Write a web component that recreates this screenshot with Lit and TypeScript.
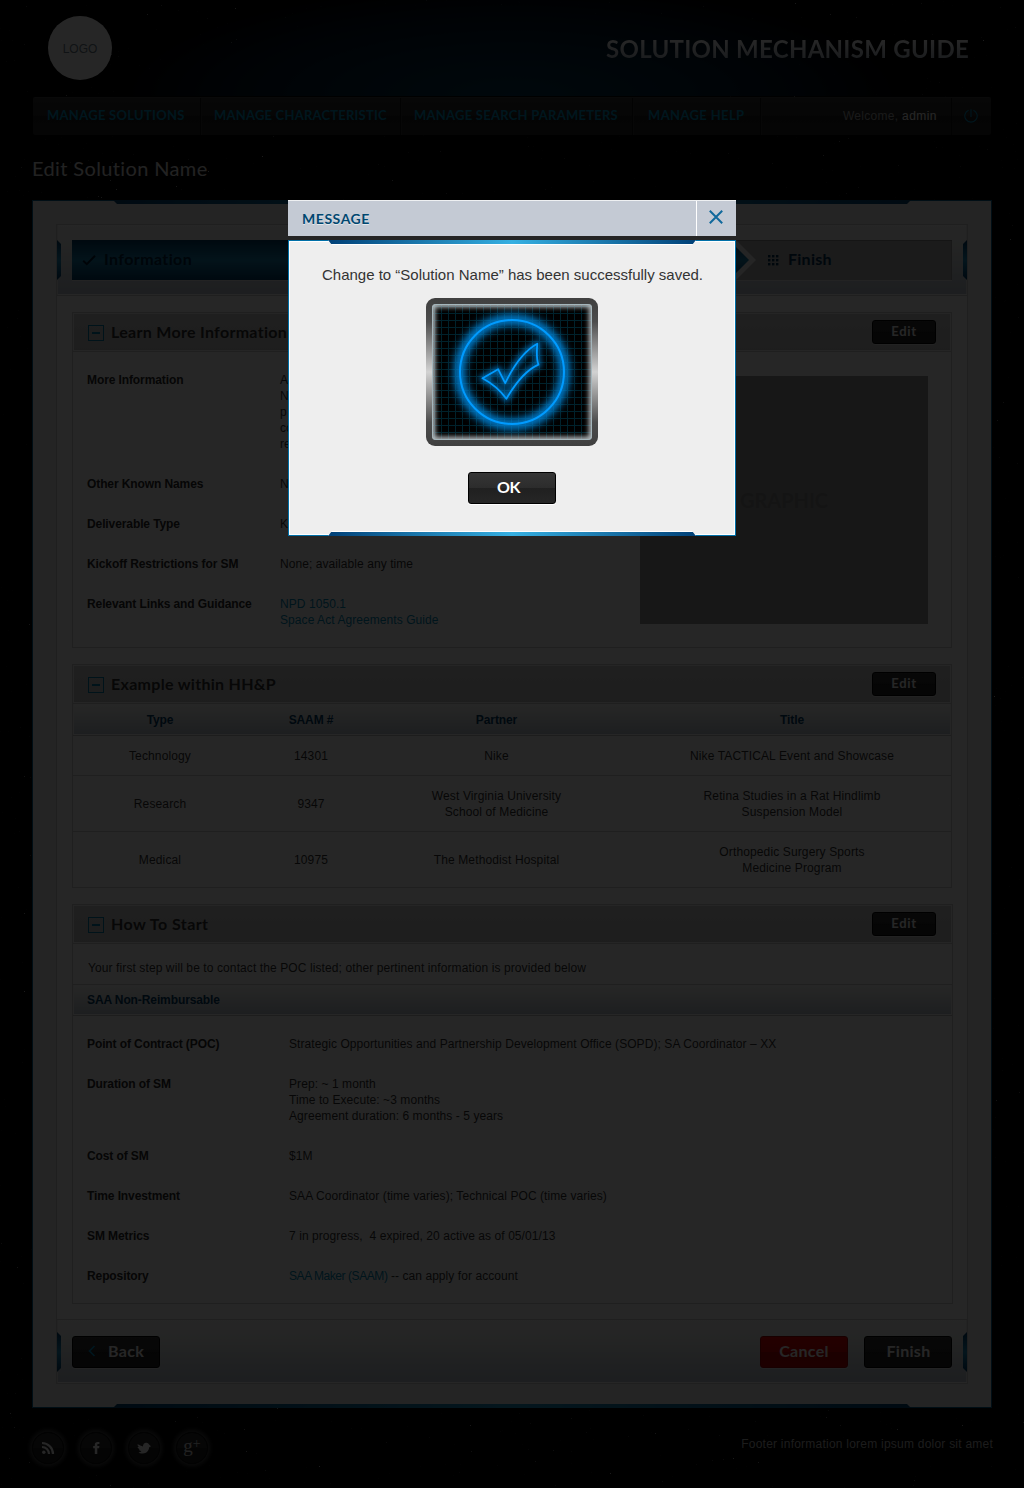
import { LitElement, html, svg, css, nothing } from "lit";
import { customElement } from "lit/decorators.js";

interface Row {
  label: string;
  lines: unknown[];
}

const MORE_INFO: Row[] = [
  { label: "More Information", lines: ["A", "N", "p", "co", "re"] },
  { label: "Other Known Names", lines: ["N"] },
  { label: "Deliverable Type", lines: ["K"] },
  { label: "Kickoff Restrictions for SM", lines: ["None; available any time"] },
  {
    label: "Relevant Links and Guidance",
    lines: [html`<a>NPD 1050.1</a>`, html`<a>Space Act Agreements Guide</a>`],
  },
];

const HOW_TO: Row[] = [
  {
    label: "Point of Contract (POC)",
    lines: ["Strategic Opportunities and Partnership Development Office (SOPD); SA Coordinator – XX"],
  },
  {
    label: "Duration of SM",
    lines: ["Prep: ~ 1 month", "Time to Execute: ~3 months", "Agreement duration: 6 months - 5 years"],
  },
  { label: "Cost of SM", lines: ["$1M"] },
  { label: "Time Investment", lines: ["SAA Coordinator (time varies); Technical POC (time varies)"] },
  { label: "SM Metrics", lines: ["7 in progress,\u00a0 4 expired, 20 active as of 05/01/13"] },
  { label: "Repository", lines: [html`<a class="tight">SAA Maker (SAAM)</a> -- can apply for account`] },
];

const EXAMPLES: string[][][] = [
  [["Technology"], ["14301"], ["Nike"], ["Nike TACTICAL Event and Showcase"]],
  [["Research"], ["9347"], ["West Virginia University", "School of Medicine"], ["Retina Studies in a Rat Hindlimb", "Suspension Model"]],
  [["Medical"], ["10975"], ["The Methodist Hospital"], ["Orthopedic Surgery Sports", "Medicine Program"]],
];

// Star field: a seeded generator keeps the dots in the same place on every load.
function makeStars(count: number) {
  let seed = 7;
  const next = () => (seed = (seed * 16807) % 2147483647) / 2147483647;
  return Array.from({ length: count }, () => ({
    x: Math.floor(next() * 1024),
    y: Math.floor(next() * 1488),
    o: 0.07 + Math.pow(next(), 7) * 0.7,
  }));
}
const STARS = makeStars(2600);

@customElement("app-root")
export class AppRoot extends LitElement {
  static styles = css`
    :host {
      display: block;
      font-family: "Liberation Sans", Arial, sans-serif;
      font-size: 12px;
      line-height: 16px;
      color: #333;
    }
    * { box-sizing: border-box; }
    svg { display: block; }
    a { color: #008ab8; }
    a.tight { letter-spacing: -0.43px; }
    .lato { font-family: Lato, "Open Sans", sans-serif; font-weight: 700; }
    .page {
      position: relative;
      width: 1024px;
      height: 1488px;
      overflow: hidden;
      background: #000;
    }
    .stars { position: absolute; inset: 0; }
    .content { position: relative; padding: 0 32px; }
    .shade { position: absolute; inset: 0; background: rgba(0, 0, 0, 0.85); }

    .header {
      height: 96px;
      padding: 0 23px 0 16px;
      display: flex;
      align-items: center;
      justify-content: space-between;
      background: radial-gradient(ellipse 400px 115px at 480px 96px, #003450 0, #00243a 40%, #001222 72%, rgba(0, 0, 0, 0) 100%);
    }
    .logo {
      width: 64px;
      height: 64px;
      padding-top: 2px;
      border-radius: 50%;
      background: #fff;
      color: #6e7f8c;
      display: flex;
      align-items: center;
      justify-content: center;
    }
    .brand {
      font-size: 24px;
      line-height: 30px;
      letter-spacing: 0.27px;
      background: linear-gradient(#fff 25%, #b8c0cc 80%);
      -webkit-background-clip: text;
      background-clip: text;
      color: transparent;
      padding-top: 1px;
    }
    .nav {
      margin: 1px 1px 0;
      height: 38px;
      display: flex;
      background: linear-gradient(#303030, #272727 50%, #1f1f1f 50%, #242424);
      border-top: 1px solid #3c3c3c;
      border-radius: 2px;
      align-items: center;
    }
    .nav-item {
      height: 37px;
      padding-left: 15px;
      font-size: 13px;
      line-height: 35px;
      letter-spacing: 0.28px;
      color: #0092c4;
      border-right: 1px solid #111;
      box-shadow: 1px 0 0 #333;
      white-space: nowrap;
    }
    .w1 { width: 168px; padding-left: 14px; }
    .w2 { width: 200px; letter-spacing: 0.21px; padding-left: 13px; }
    .w3 { width: 232px; letter-spacing: 0.24px; padding-left: 13px; }
    .w4 { width: 128px; letter-spacing: 0.36px; }
    .welcome {
      flex: 1;
      height: 37px;
      line-height: 36px;
      text-align: right;
      padding-right: 14px;
      border-right: 1px solid #111;
      color: #aaa;
      letter-spacing: 0.3px;
    }
    .welcome b { color: #fff; font-weight: 400; letter-spacing: 0.45px; }
    .power { width: 39px; display: flex; justify-content: center; padding: 0 1px 2px 0; }
    .title {
      margin: 0;
      padding-top: 21px;
      height: 65px;
      font-family: Lato, sans-serif;
      font-weight: 400;
      font-size: 20px;
      line-height: 24px;
      letter-spacing: 0.37px;
      color: #e0e0e0;
    }

    .frame {
      position: relative;
      height: 1208px;
      background: #efefef;
      border: 1px solid #005c8f;
      padding: 23px;
    }
    .strip {
      position: absolute;
      left: 80px;
      right: 80px;
      height: 4px;
      background: linear-gradient(90deg, #004274, #1d94c4 50%, #004274);
    }
    .strip.top { top: -1px; clip-path: polygon(0 0, 100% 0, calc(100% - 4px) 100%, 4px 100%); }
    .strip.bottom { bottom: -1px; clip-path: polygon(4px 0, calc(100% - 4px) 0, 100% 100%, 0 100%); }
    .inner { height: 1160px; border: 1px solid #cfcfcf; background: #fff; }
    .band {
      position: relative;
      padding: 15px;
      background: linear-gradient(#fafafa, #f0f3f1 30%, #bfc8d3 95%);
      box-shadow: inset 1px 0 0 #e8e8e8, inset 0 -1px 0 #fff, inset -1px 0 0 #e8e8e8;
      display: flex;
    }
    .band.steps { height: 71px; border-bottom: 1px solid #cfcfcf; }
    .band.actions { height: 64px; border-top: 1px solid #cfcfcf; padding-top: 16px; }
    .cap {
      position: absolute;
      top: 15px;
      width: 4px;
      height: 40px;
      background: linear-gradient(#003b69, #1d8fc0 50%, #003b69);
    }
    .actions .cap { top: 12px; }
    .cap.l { left: 0; clip-path: polygon(0 0, 100% 4px, 100% calc(100% - 4px), 0 100%); }
    .cap.r { right: 0; clip-path: polygon(100% 0, 0 4px, 0 calc(100% - 4px), 100% 100%); }
    .track { width: 880px; height: 40px; display: flex; background: #b4b4b4; box-shadow: inset 0 1px 0 #8a8a8a, inset -1px 0 0 #a0a0a0, 0 1px 0 #e8e8e8; }
    .chev {
      width: 684px;
      height: 40px;
      background: #f4f4f4;
      clip-path: polygon(0 0, 664px 0, 100% 50%, 664px 100%, 0 100%);
    }
    .step-on {
      width: 677px;
      height: 40px;
      padding-left: 10px;
      display: flex;
      align-items: center;
      gap: 8px;
      background: linear-gradient(#003c66, #1a82ae 50%, #003c66);
      clip-path: polygon(0 0, 657px 0, 100% 50%, 657px 100%, 0 100%);
      color: #002240;
      font-size: 16px;
      letter-spacing: 0.39px;
    }
    .step-off {
      padding-left: 12px;
      display: flex;
      align-items: center;
      gap: 9px;
      color: #003055;
      font-size: 16px;
      letter-spacing: 0.25px;
    }
    .step-on span, .step-off span { position: relative; top: -1px; }

    .section { width: 880px; margin: 16px 0 0 15px; border: 1px solid #cfcfcf; }
    .section.learn { height: 336px; }
    .section.example { height: 224px; }
    .section.how { width: 881px; height: 400px; margin-bottom: 15px; }
    .shead {
      height: 39px;
      border-bottom: 1px solid #cfcfcf;
      padding: 1px;
      display: flex;
      align-items: center;
      background: linear-gradient(#d0d0d0, #c4c4c4) content-box, #f4f4f4;
      font-size: 16px;
      color: #333;
      letter-spacing: 0.3px;
    }
    .how .shead { letter-spacing: 0.44px; }
    .shead svg { margin: 2px 0 0 14px; }
    .shead h2 { margin: 0 0 0 7px; font: inherit; flex: 1; }
    .btn {
      display: flex;
      align-items: center;
      justify-content: center;
      border: 1px solid #000;
      border-radius: 3px;
      background: linear-gradient(#353535, #2c2c2c 50%, #202020 50%, #262626);
      color: #fff;
      box-shadow: 0 1px 0 rgba(255, 255, 255, 0.5);
    }
    .btn.small { width: 64px; height: 24px; margin-right: 14px; font-size: 13px; letter-spacing: 0.7px; padding: 0 0 2px; }
    .how .btn.small { margin-right: 15px; }
    .btn.big { width: 88px; height: 32px; font-size: 16px; letter-spacing: 0.3px; padding-bottom: 2px; }
    .btn.cancel { margin-left: auto; background: linear-gradient(#f00404, #d80000 50%, #b80000 50%, #c40000); border-color: #a00000; }
    .btn.finish { margin-left: 16px; padding-left: 1px; }
    .btn.back { gap: 12px; }

    .split { display: flex; }
    .details { padding: 20px 0 0 14px; display: grid; row-gap: 24px; letter-spacing: 0.07px; }
    .row { display: grid; grid-template-columns: 193px auto; }
    .how .row { grid-template-columns: 202px auto; }
    .row b { letter-spacing: -0.1px; color: #2b2b2b; }
    .graphic {
      width: 288px;
      height: 248px;
      margin: 24px 23px 0 auto;
      background: #9a9a9a;
      color: #878787;
      font-size: 20px;
      display: flex;
      align-items: center;
      justify-content: center;
    }
    .cols { display: grid; grid-template-columns: 174px 128px 243px 14px 320px; justify-items: center; align-items: center; text-align: center; letter-spacing: 0.13px; }
    .cols > :last-child { grid-column: 5; }
    .sub {
      height: 32px;
      border-bottom: 1px solid #c4c4c4;
      padding: 0 1px;
      background: linear-gradient(#fdfdfd, #f2f5f3 25%, #bfc8d3);
      box-shadow: inset 1px 0 0 #f4f4f4, inset -1px 0 0 #f4f4f4, inset 0 -1px 0 #fafafa;
      color: #003c66;
      font-weight: 700;
      letter-spacing: -0.1px;
    }
    .cols.sub { padding: 0; }
    .sub.single { height: 31px; line-height: 31px; padding-left: 14px; }
    .line { border-bottom: 1px solid #cfcfcf; }
    .line.h0 { height: 40px; }
    .line.h1, .line.h2 { height: 56px; }
    .line.h2 { border-bottom: 0; }
    .intro { height: 41px; line-height: 48px; padding-left: 15px; border-bottom: 1px solid #cfcfcf; letter-spacing: 0.1px; }

    .footer { display: flex; justify-content: space-between; padding: 24px 0 0; }
    .social { display: flex; gap: 16px; }
    .disc {
      width: 32px;
      height: 32px;
      border-radius: 50%;
      background: linear-gradient(#2c2c2c 50%, #202020 50%);
      border: 1px solid #111;
      box-shadow: 0 0 5px 2px #4c4c4c;
      color: #fff;
      display: flex;
      align-items: center;
      justify-content: center;
    }
    .gplus { font-family: "Liberation Serif", serif; font-size: 19px; line-height: 20px; color: #ddd; position: relative; top: -2px; }
    .gplus sup { font-size: 14px; line-height: 0; position: relative; top: 3px; }
    .note { margin: 4px -1px 0 0; color: #bbb; letter-spacing: 0.23px; }

    .dialog { position: absolute; left: 288px; top: 200px; width: 448px; display: grid; gap: 4px; }
    .dhead { height: 36px; display: flex; background: #c4cad4; border-top: 1px solid #eef0f2; }
    .dhead h1 {
      margin: 0;
      flex: 1;
      padding-left: 14px;
      font-size: 14px;
      line-height: 36px;
      letter-spacing: 0.55px;
      color: #004770;
      text-shadow: 0 1px 0 #e4e8ec;
    }
    .close { width: 40px; border-left: 1px solid #fff; display: flex; justify-content: center; padding: 9px 2px 0 0; }
    .dbody {
      position: relative;
      height: 296px;
      border: 1px solid #0070a8;
      background: #eee;
      box-shadow: inset 0 0 0 1px #fff;
      display: flex;
      flex-direction: column;
      align-items: center;
      padding-top: 24px;
    }
    .dstrip { position: absolute; left: 39px; right: 39px; height: 5px; background: #fff; }
    .dstrip i { display: block; height: 4px; background: linear-gradient(90deg, #004077, #36b0e2 50%, #004077); }
    .dstrip.top { top: -1px; clip-path: polygon(0 0, 100% 0, calc(100% - 4px) 100%, 4px 100%); }
    .dstrip.bottom { bottom: -1px; padding-top: 1px; clip-path: polygon(4px 0, calc(100% - 4px) 0, 100% 100%, 0 100%); }
    .dmsg { font-size: 15px; line-height: 20px; color: #333; padding-left: 1px; white-space: nowrap; }
    .pic { margin-top: 13px; }
    .btn.ok { margin-top: 26px; padding-right: 7px; letter-spacing: -0.4px; box-shadow: 0 1px 0 #fff; }
  `;

  private section(title: string, cls: string, body: unknown) {
    return html`<section class="section ${cls}">
      <div class="shead lato">
        <svg width="16" height="16" viewBox="0 0 16 16">
          <rect x=".5" y=".5" width="15" height="15" fill="none" stroke="#007eae" />
          <rect x="4" y="7" width="8" height="2" fill="#007eae" />
        </svg>
        <h2>${title}</h2>
        <div class="btn small">Edit</div>
      </div>
      ${body}
    </section>`;
  }

  private details(rows: Row[]) {
    return html`<div class="details">
      ${rows.map(
        (r) => html`<div class="row">
          <b>${r.label}</b>
          <div>${r.lines.map((l) => html`<div>${l}</div>`)}</div>
        </div>`
      )}
    </div>`;
  }

  private cells(cells: string[][]) {
    return cells.map((lines) => html`<div>${lines.map((l, i) => html`${i ? html`<br />` : nothing}${l}`)}</div>`);
  }

  private checkScreen() {
    const check = "M482.5 378.3L498.2 369.3L505.2 383.2C513 367 524 351 537.3 343.8C536.7 352 536 358 538.4 364.6C526 370 515 384 506.4 398.7C500 390 493 384 482.5 378.3Z";
    const xs = Array.from({ length: 22 }, (_, i) => 434.5 + i * 7);
    const ys = Array.from({ length: 19 }, (_, i) => 306.5 + i * 7);
    return html`<svg class="pic" width="172" height="148" viewBox="426 298 172 148">
      <defs>
        <linearGradient id="rim" x1="0" y1="0" x2="0" y2="1">
          <stop offset="0" stop-color="#3f3f3f" />
          <stop offset=".16" stop-color="#4c4c4c" />
          <stop offset=".5" stop-color="#d2d2d2" />
          <stop offset=".84" stop-color="#4c4c4c" />
          <stop offset="1" stop-color="#3f3f3f" />
        </linearGradient>
        <filter id="glow" x="-40%" y="-40%" width="180%" height="180%"><feGaussianBlur stdDeviation="5" /></filter>
        <filter id="glow2" x="-40%" y="-40%" width="180%" height="180%"><feGaussianBlur stdDeviation="3" /></filter>
        <filter id="edge" x="-10%" y="-10%" width="120%" height="120%"><feGaussianBlur stdDeviation="2.6" /></filter>
        <clipPath id="screen"><rect x="432" y="304" width="160" height="136" rx="3" /></clipPath>
      </defs>
      <rect x="426" y="298" width="172" height="148" rx="9" fill="url(#rim)" />
      <g clip-path="url(#screen)">
        <rect x="432" y="304" width="160" height="136" fill="#000" />
        ${xs.map((x) => svg`<line x1=${x} x2=${x} y1="304" y2="440" stroke="#00222c" />`)}
        ${ys.map((y) => svg`<line y1=${y} y2=${y} x1="432" x2="592" stroke="#00222c" />`)}
        <circle cx="512" cy="372" r="52.5" fill="none" stroke="#0086da" stroke-width="10" filter="url(#glow)" />
        <circle cx="512" cy="372" r="52" fill="none" stroke="#0078c8" stroke-width="2.5" filter="url(#glow2)" />
        <path d=${check} fill="none" stroke="#007ccc" stroke-width="5" filter="url(#glow2)" />
        <rect x="432" y="304" width="160" height="136" rx="3" fill="none" stroke="#c2c8ca" stroke-width="6" filter="url(#edge)" />
        <rect x="432.5" y="304.5" width="159" height="135" rx="3" fill="none" stroke="#a4b6bc" />
      </g>
      <circle cx="512" cy="372" r="52" fill="none" stroke="#009bff" stroke-width="2" />
      <path d=${check} fill="none" stroke="#009bff" stroke-width="1.8" stroke-linejoin="round" />
    </svg>`;
  }

  render() {
    return html`<div class="page">
      <svg class="stars" width="1024" height="1488">
        ${STARS.map((s) => svg`<rect x=${s.x} y=${s.y} width="1" height="1" fill="#fff" opacity=${s.o} />`)}
      </svg>
      <div class="content">
        <header class="header">
          <div class="logo">LOGO</div>
          <div class="brand lato">SOLUTION MECHANISM GUIDE</div>
        </header>
        <nav class="nav">
          <div class="nav-item lato w1">MANAGE SOLUTIONS</div>
          <div class="nav-item lato w2">MANAGE CHARACTERISTIC</div>
          <div class="nav-item lato w3">MANAGE SEARCH PARAMETERS</div>
          <div class="nav-item lato w4">MANAGE HELP</div>
          <div class="welcome">Welcome, <b>admin</b></div>
          <div class="power">
            <svg width="14" height="14" viewBox="0 0 14 14" fill="none" stroke="#0092c4" stroke-width="1.1">
              <path d="M4.6 1.2A6.2 6.2 0 1 0 9.4 1.2M7 .2V8" />
            </svg>
          </div>
        </nav>
        <h1 class="title">Edit Solution Name</h1>

        <main class="frame">
          <i class="strip top"></i><i class="strip bottom"></i>
          <div class="inner">
            <div class="band steps">
              <i class="cap l"></i><i class="cap r"></i>
              <div class="track">
                <div class="chev">
                  <div class="step-on lato">
                    <svg width="14" height="12" viewBox="0 0 14 12" fill="none" stroke="#001a33" stroke-width="2"><path d="M1.2 6.8L4.8 10.2L13 1.8" /></svg>
                    <span>Information</span>
                  </div>
                </div>
                <div class="step-off lato">
                  <svg width="11" height="11" viewBox="0 0 11 11" fill="#003055">
                    ${[0, 4, 8].map((y) => [0, 4, 8].map((x) => svg`<rect x=${x} y=${y} width="2.4" height="2.4" />`))}
                  </svg>
                  <span>Finish</span>
                </div>
              </div>
            </div>

            ${this.section(
              "Learn More Information",
              "learn",
              html`<div class="split">${this.details(MORE_INFO)}<div class="graphic lato">GRAPHIC</div></div>`
            )}
            ${this.section(
              "Example within HH&P",
              "example",
              html`<div class="cols sub"><div>Type</div><div>SAAM #</div><div>Partner</div><div>Title</div></div>
                ${EXAMPLES.map((cells, i) => html`<div class="cols line h${i}">${this.cells(cells)}</div>`)}`
            )}
            ${this.section(
              "How To Start",
              "how",
              html`<div class="intro">Your first step will be to contact the POC listed; other pertinent information is provided below</div>
                <div class="sub single">SAA Non-Reimbursable</div>
                ${this.details(HOW_TO)}`
            )}

            <div class="band actions">
              <i class="cap l"></i><i class="cap r"></i>
              <div class="btn big back lato">
                <svg width="8" height="12" viewBox="0 0 8 12" fill="none" stroke="#0096cc" stroke-width="1.6"><path d="M6.5 1L1.5 6L6.5 11" /></svg>
                Back
              </div>
              <div class="btn big cancel lato">Cancel</div>
              <div class="btn big finish lato">Finish</div>
            </div>
          </div>
        </main>

        <footer class="footer">
          <div class="social">
            <div class="disc">
              <svg width="14" height="14" viewBox="0 0 14 14" fill="none" stroke="currentColor" stroke-width="2.2">
                <circle cx="2.8" cy="11.2" r="1.7" fill="currentColor" stroke="none" />
                <path d="M1 6A7 7 0 0 1 8 13M1 2A11 11 0 0 1 12 13" />
              </svg>
            </div>
            <div class="disc">
              <svg width="7" height="12" viewBox="0 0 7 12" fill="currentColor"><path d="M6.4 .1V2.1H5.2C4.5 2.1 4.3 2.4 4.3 3V4.1H6.4L6.1 6.2H4.3V12H1.8V6.2H.2V4.1H1.8V2.8C1.8 1 2.9 .1 4.6 .1Z" /></svg>
            </div>
            <div class="disc">
              <svg width="14" height="12" viewBox="0 0 14 12" fill="currentColor"><path d="M.6 2.3C2.4 3 4.3 4.1 5.9 4.6C6 2.2 7.4 .6 9.4 .7C10.6 .8 11.5 1.4 12 2.5L14 4.2L12.2 5.2C11.8 8.9 9.4 11.2 5.9 11.4C3.9 11.5 2.4 11.1 1.6 10.4C2.9 10.2 3.7 9.9 4.4 9.2C3 8.8 2.1 8.2 1.8 7.5L3 7.3C1.6 6.7 .7 5.8 .6 4.9L1.9 5C.9 4.2 .5 3.2 .6 2.3Z" /></svg>
            </div>
            <div class="disc"><span class="gplus">g<sup>+</sup></span></div>
          </div>
          <div class="note">Footer information lorem ipsum dolor sit amet</div>
        </footer>
      </div>

      <div class="shade"></div>

      <div class="dialog">
        <div class="dhead">
          <h1 class="lato">MESSAGE</h1>
          <div class="close">
            <svg width="14" height="14" viewBox="0 0 14 14" fill="none" stroke="#10699c" stroke-width="2"><path d="M.8 .8L13.2 13.2M13.2 .8L.8 13.2" /></svg>
          </div>
        </div>
        <div class="dbody">
          <div class="dstrip top"><i></i></div>
          <div class="dstrip bottom"><i></i></div>
          <div class="dmsg">Change to “Solution Name” has been successfully saved.</div>
          ${this.checkScreen()}
          <div class="btn big ok lato">OK</div>
        </div>
      </div>
    </div>`;
  }
}
